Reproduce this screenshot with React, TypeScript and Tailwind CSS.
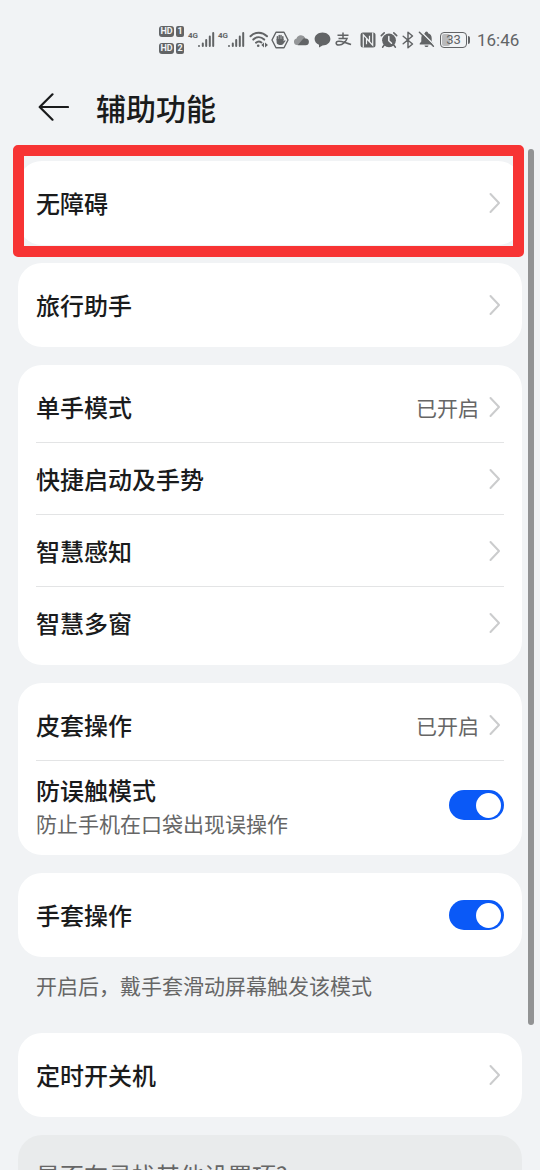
import { useState, type ReactNode } from "react";

function HdBadge({ sim }: { sim: number }) {
  return (
    <div className="flex h-[11px] gap-[2px] text-[9px] leading-[11px] font-bold text-[#f1f3f5]">
      <span className="flex w-[15px] justify-center rounded-[3px] bg-[#626466]">HD</span>
      <span className="flex w-[8px] justify-center rounded-[2px] bg-[#626466]">{sim}</span>
    </div>
  );
}

function Signal() {
  return (
    <div className="flex w-[27px]">
      <span className="w-[9px] pt-px text-[8px] leading-[8px] font-bold tracking-tight">4G</span>
      <svg width="18" height="17" viewBox="0 0 18 17" stroke="currentColor" strokeWidth="2" strokeLinecap="round">
        <path d="M2 15v.1M5.8 12.5V15M9.2 9V15M12.8 5.5V15M16.2 2V15" />
      </svg>
    </div>
  );
}

function WifiIcon() {
  return (
    <svg className="ml-1" width="20" height="17" viewBox="0 0 20 17" fill="none" stroke="currentColor" strokeWidth="2" strokeLinecap="round">
      <path d="M1.5 5.2C6.3.5 13.2.5 18 5.2M4.3 8.6c3.3-3.1 7.6-3.1 10.9 0M7 11.7c1.8-1.6 3.6-1.6 5.4-.2" />
      <circle cx="9.2" cy="14.8" r="1.3" fill="currentColor" stroke="none" />
      <path d="M15 11.6v5L12.3 14zM16 11.6v5l3-2.5z" fill="currentColor" stroke="none" />
    </svg>
  );
}

function HandIcon() {
  return (
    <svg className="ml-0.5" width="18" height="18" viewBox="0 0 18 18" fill="none" stroke="currentColor">
      <path d="M5 1.3h8L17 9l-4 7.7H5L1 9z" strokeWidth="1.4" strokeLinejoin="round" />
      <path d="M6.4 9V5.7M8.2 8V4.4M10 8V4.5M11.8 9V5.8" strokeWidth="1.5" strokeLinecap="round" />
      <path d="M5.6 8h6.9v2.3l1-.9c.8-.5 1.3.2.8.8l-2.1 2.7c-.5.7-1.2 1-2.2 1H8.4c-1.8 0-2.8-1.1-2.8-2.8z" fill="currentColor" stroke="none" />
    </svg>
  );
}

function CloudIcon() {
  return (
    <svg className="ml-1" width="16" height="12" viewBox="0 0 16 12" fill="currentColor">
      <path d="M4 11a3.3 3.3 0 0 1-.5-6.5A4.8 4.8 0 0 1 12.3 4L8 11z" opacity=".65" />
      <path d="M4.6 11.2 9.3 5.8a3.3 3.3 0 0 1 3.4-1.4 3.4 3.4 0 0 1-.4 6.8z" />
    </svg>
  );
}

function ChatIcon() {
  return (
    <svg className="ml-[5px]" width="17" height="16" viewBox="0 0 17 16" fill="currentColor">
      <path d="M8.5.6c4.4 0 7.9 2.9 7.9 6.5s-3.5 6.5-7.9 6.5L5 15.6v-2.8C2.3 11.7.6 9.6.6 7.1.6 3.5 4.1.6 8.5.6z" />
    </svg>
  );
}

function AlipayIcon() {
  return (
    <svg className="ml-1" width="17" height="15" viewBox="0 0 17 15" fill="none" stroke="currentColor" strokeWidth="1.5">
      <path d="M2.5 3.2h11M8 .6v5.6M3.5 6.4h8.6c-1 3.2-4.4 6.6-8.1 6.6-3.7 0-3.8-3.6-.3-3.8 3.9-.2 6.6 2 12.4 3.2" />
    </svg>
  );
}

function NfcIcon() {
  return (
    <svg className="ml-2" width="16" height="16" viewBox="0 0 16 16">
      <rect x=".5" y=".5" width="15" height="15" rx="2.5" fill="currentColor" />
      <path d="M3.3 15.4V2.8l6.2 6.7V3.8M12.7.6v12.6L6.5 6.5v5.7" fill="none" stroke="#f1f3f5" strokeWidth="1.2" />
    </svg>
  );
}

function AlarmIcon() {
  return (
    <svg className="ml-1" width="18" height="18" viewBox="0 0 18 18" fill="none" stroke="currentColor" strokeLinecap="round">
      <path d="M1.3 4.6 4.2 1.8M16.7 4.6l-2.9-2.8" strokeWidth="1.6" />
      <path d="m4.2 14-1.6 2.2M13.8 14l1.6 2.2" strokeWidth="1.5" />
      <circle cx="9" cy="9.3" r="6.9" fill="currentColor" stroke="none" />
      <path d="M8.8 5.5v4.2l2.7 2.5" stroke="#f1f3f5" strokeWidth="1.5" />
    </svg>
  );
}

function BluetoothIcon() {
  return (
    <svg className="ml-1" width="12" height="18" viewBox="0 0 12 18" fill="none" stroke="currentColor" strokeWidth="1.5" strokeLinecap="round" strokeLinejoin="round">
      <path d="M1.2 5.2 10.5 13 6 16.8V1.2L10.5 5l-9.3 7.8" />
    </svg>
  );
}

function MutedBellIcon() {
  return (
    <svg className="ml-1" width="17" height="17" viewBox="0 0 17 17" fill="currentColor">
      <path d="M6.9 2.2a1.6 1.6 0 0 1 3.2 0c2.4.7 3.6 2.6 3.6 5v3.2l1.6 2v1H1.7v-1l1.6-2V7.2c0-2.4 1.2-4.3 3.6-5zM6.5 14.4h4c-.3 2.2-3.7 2.2-4 0z" />
      <path d="m2.6.3 14 14" stroke="#f1f3f5" strokeWidth="1.5" />
      <path d="m1.4 1.2 14 14" stroke="currentColor" strokeWidth="1.5" strokeLinecap="round" />
    </svg>
  );
}

function Battery({ level }: { level: number }) {
  return (
    <div className="ml-[5px] flex items-center gap-px">
      <div className="relative h-4 w-[27px] overflow-hidden rounded-[4px] border-[1.5px] border-[#626466] p-px">
        <div className="h-full rounded-[2px] bg-[#b9babc]" style={{ width: `${level}%` }} />
        <span className="absolute inset-0 text-center text-[13px] leading-[14px]">{level}</span>
      </div>
      <div className="h-2 w-[2px] rounded-r-sm bg-[#626466]" />
    </div>
  );
}

function StatusBar() {
  return (
    <div className="flex h-[78px] items-center pt-px pl-[159px] font-[Roboto,sans-serif] text-[#626466]">
      <div className="flex flex-col gap-[6px]">
        <HdBadge sim={1} />
        <HdBadge sim={2} />
      </div>
      <div className="ml-1 flex gap-[3px]">
        <Signal />
        <Signal />
      </div>
      <WifiIcon />
      <HandIcon />
      <CloudIcon />
      <ChatIcon />
      <AlipayIcon />
      <NfcIcon />
      <AlarmIcon />
      <BluetoothIcon />
      <MutedBellIcon />
      <Battery level={33} />
      <span className="ml-[7px] text-[17px] leading-5">16:46</span>
    </div>
  );
}

function Chevron() {
  return (
    <svg className="mr-[3px] shrink-0" width="12" height="22" viewBox="0 0 12 22" fill="none" stroke="#cbcccd" strokeWidth="2" strokeLinecap="round" strokeLinejoin="round">
      <path d="m1.5 2 8.5 9-8.5 9" />
    </svg>
  );
}

function Toggle() {
  const [on, setOn] = useState(true);

  return (
    <button
      type="button"
      role="switch"
      aria-checked={on}
      onClick={() => setOn(!on)}
      className={`flex h-[30px] w-[55px] items-center rounded-full px-[3px] ${on ? "justify-end bg-[#0a59f7]" : "justify-start bg-gray-300"}`}
    >
      <span className="size-[25px] rounded-full bg-white" />
    </button>
  );
}

function Card({ children }: { children: ReactNode }) {
  return <section className="rounded-3xl bg-white px-[18px] py-1.5">{children}</section>;
}

interface RowProps {
  title: string;
  desc?: string;
  value?: string;
  toggle?: boolean;
  divider?: boolean;
}

function Row({ title, desc, value, toggle, divider }: RowProps) {
  return (
    <div className={`flex items-center justify-between ${desc ? "h-[88px]" : "h-[72px]"} ${divider ? "border-b border-[#e3e4e5]" : ""}`}>
      <div>
        <div className="text-2xl leading-9 font-medium">{title}</div>
        {desc && <div className="text-[21px] leading-[31px] text-[#666]">{desc}</div>}
      </div>
      {toggle ? (
        <Toggle />
      ) : (
        <div className="flex items-center gap-[10px]">
          {value && <span className="text-[21px] leading-8 text-[#666]">{value}</span>}
          <Chevron />
        </div>
      )}
    </div>
  );
}

export default function App() {
  return (
    <div className="relative h-[1170px] w-[540px] overflow-hidden bg-[#f1f3f5] font-['Noto_Sans_CJK_SC',sans-serif] text-[#1a1b1c]">
      <StatusBar />

      <header className="flex h-[58px] items-center gap-[27px] pl-[38px]">
        <svg width="31" height="28" viewBox="0 0 31 28" fill="none" stroke="currentColor" strokeWidth="2.2" strokeLinecap="round" strokeLinejoin="round">
          <path d="M14.5 1.3 1.7 14l12.8 12.7M2 14h28" />
        </svg>
        <h1 className="text-[30px] leading-[44px] font-medium">辅助功能</h1>
      </header>

      <main className="mt-[25px] flex flex-col gap-[18px] px-[18px]">
        <Card>
          <Row title="无障碍" />
        </Card>
        <Card>
          <Row title="旅行助手" />
        </Card>
        <Card>
          <Row title="单手模式" value="已开启" divider />
          <Row title="快捷启动及手势" divider />
          <Row title="智慧感知" divider />
          <Row title="智慧多窗" />
        </Card>
        <Card>
          <Row title="皮套操作" value="已开启" divider />
          <Row title="防误触模式" desc="防止手机在口袋出现误操作" toggle />
        </Card>
        <div>
          <Card>
            <Row title="手套操作" toggle />
          </Card>
          <p className="h-[58px] px-[18px] pt-3 text-[21px] leading-8 text-[#666]">开启后，戴手套滑动屏幕触发该模式</p>
        </div>
        <Card>
          <Row title="定时开关机" />
        </Card>
        <section className="h-40 rounded-3xl bg-[#e9ebec] px-[18px] pt-[22px] text-2xl leading-9 text-[#666]">
          是否在寻找其他设置项?
        </section>
      </main>

      {/* highlight frame over the first card */}
      <div className="pointer-events-none absolute top-[145px] left-[13px] h-[112px] w-[511px] rounded-[5px] border-[11px] border-[#f73434]" />

      {/* scrollbar thumb */}
      <div className="absolute top-[149px] right-[6px] h-[876px] w-[6px] rounded-full bg-[#929394]" />
    </div>
  );
}
